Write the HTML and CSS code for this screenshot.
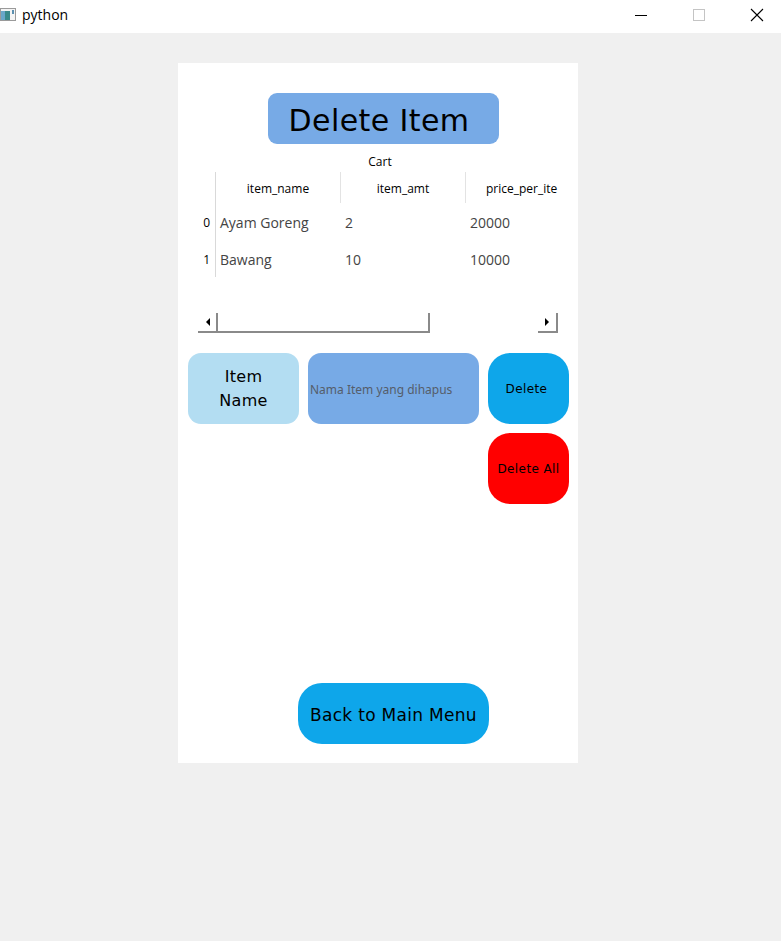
FILE: index.html
```html
<!DOCTYPE html>
<html>
<head>
<meta charset="utf-8">
<title>python</title>
<link rel="stylesheet" href="styles.css">
</head>
<body>
<div class="titlebar">
  <div class="tb-left">
    <svg class="app-icon" width="16" height="14" viewBox="0 0 16 14">
      <rect x="0.5" y="0.5" width="15" height="12" fill="#f4f4f4" stroke="#9a9a9a"/>
      <rect x="1" y="3" width="9" height="9" fill="#3a8a8a"/>
      <rect x="1" y="3" width="4" height="9" fill="#6aa7c9"/>
      <rect x="12" y="2" width="2" height="4" fill="#5a8fb0"/>
    </svg>
    <span class="tb-title">python</span>
  </div>
  <div class="tb-controls">
    <span class="ctl"><svg width="12" height="12" viewBox="0 0 12 12"><path d="M0 6.5h12" stroke="#000" stroke-width="1"/></svg></span>
    <span class="ctl"><svg width="12" height="12" viewBox="0 0 12 12"><rect x="0.5" y="0.5" width="11" height="11" fill="none" stroke="#c4c4c4"/></svg></span>
    <span class="ctl"><svg width="14" height="14" viewBox="0 0 14 14"><path d="M1 1L13 13M13 1L1 13" stroke="#000" stroke-width="1.1"/></svg></span>
  </div>
</div>
<div class="desktop">
  <div class="panel">
    <div class="heading">Delete Item</div>
    <div class="cart-label">Cart</div>
    <div class="table">
      <div class="idx head"></div>
      <div class="hcell">item_name</div>
      <div class="hcell">item_amt</div>
      <div class="hcell last">price_per_ite</div>

      <div class="idx">0</div>
      <div class="cell">Ayam Goreng</div>
      <div class="cell">2</div>
      <div class="cell">20000</div>

      <div class="idx">1</div>
      <div class="cell">Bawang</div>
      <div class="cell">10</div>
      <div class="cell">10000</div>
    </div>
    <div class="scrollbar">
      <div class="sb-arrow left"><span class="tri-left"></span></div>
      <div class="sb-thumb"></div>
      <div class="sb-track"></div>
      <div class="sb-arrow right"><span class="tri-right"></span></div>
    </div>
    <div class="form-row">
      <div class="label-box">Item<br>Name</div>
      <div class="input-box">Nama Item yang dihapus</div>
      <div class="btn-col">
        <div class="btn delete">Delete</div>
        <div class="btn delete-all">Delete All</div>
      </div>
    </div>
    <div class="spacer"></div>
    <div class="back">Back to Main Menu</div>
  </div>
</div>
</body>
</html>
```
FILE: styles.css
```css
html, body {
  margin: 0;
  padding: 0;
  background: #f0f0f0;
  width: 781px;
  height: 941px;
  overflow: hidden;
}
.titlebar {
  height: 33px;
  background: #ffffff;
  display: flex;
  justify-content: space-between;
  align-items: flex-start;
}
.tb-left {
  display: flex;
  align-items: center;
  height: 29px;
}
.tb-title {
  font-family: "Open Sans", "Liberation Sans", sans-serif;
  font-size: 14px;
  color: #000;
  margin-left: 6px;
}
.tb-controls {
  display: flex;
  height: 29px;
  margin-right: -5px;
}
.ctl {
  width: 58px;
  display: flex;
  align-items: center;
  justify-content: center;
}
.desktop {
  padding-left: 178px;
  padding-top: 30px;
}
.panel {
  width: 400px;
  height: 700px;
  background: #ffffff;
  display: flex;
  flex-direction: column;
  font-family: "Open Sans", "Noto Sans", sans-serif;
}
.heading {
  margin-top: 30px;
  margin-left: 90px;
  width: 231px;
  height: 51px;
  background: #77aae6;
  border-radius: 9px;
  display: flex;
  align-items: center;
  justify-content: center;
  font-family: "DejaVu Sans", sans-serif;
  font-size: 30px;
  letter-spacing: 0.4px;
  color: #000;
  box-sizing: border-box;
  padding-right: 9px;
  padding-top: 3px;
}
.cart-label {
  margin-top: 10px;
  text-align: center;
  margin-left: 4px;
  font-size: 12px;
  line-height: 16px;
  color: #000;
}
.table {
  margin-top: 2px;
  margin-left: 20px;
  width: 362px;
  display: grid;
  grid-template-columns: 18px 125px 125px 94px;
  grid-template-rows: 31px 37px 37px;
  overflow: hidden;
}
.idx {
  border-right: 1px solid #d9d9d9;
  font-size: 12px;
  color: #000;
  display: flex;
  align-items: center;
  justify-content: flex-end;
  padding-right: 5px;
  padding-top: 2px;
  box-sizing: border-box;
}
.hcell {
  font-size: 12px;
  color: #000;
  display: flex;
  align-items: center;
  justify-content: center;
  border-right: 1px solid #e3e3e3;
  white-space: nowrap;
  overflow: hidden;
  padding-top: 2px;
}
.hcell.last {
  border-right: none;
  justify-content: flex-start;
  padding-left: 20px;
}
.cell {
  font-size: 14px;
  color: #444;
  display: flex;
  align-items: center;
  padding-left: 4px;
  padding-top: 1px;
  white-space: nowrap;
}
.scrollbar {
  margin-top: 36px;
  margin-left: 20px;
  width: 360px;
  height: 20px;
  display: flex;
  align-items: stretch;
}
.sb-arrow {
  width: 20px;
  box-sizing: border-box;
  border-bottom: 2px solid #8a8a8a;
  display: flex;
  align-items: center;
  justify-content: center;
}
.sb-arrow.left { border-right: 2px solid #8a8a8a; }
.sb-arrow.right { border-right: 2px solid #8a8a8a; }
.tri-left {
  width: 0; height: 0;
  border-top: 4px solid transparent;
  border-bottom: 4px solid transparent;
  border-right: 4px solid #000;
  margin-left: 2px;
}
.tri-right {
  width: 0; height: 0;
  border-top: 4px solid transparent;
  border-bottom: 4px solid transparent;
  border-left: 4px solid #000;
}
.sb-thumb {
  width: 212px;
  box-sizing: border-box;
  border-bottom: 2px solid #8a8a8a;
  border-right: 2px solid #8a8a8a;
}
.sb-track { flex: 1; }
.form-row {
  margin-top: 20px;
  margin-left: 10px;
  display: flex;
  gap: 9px;
  align-items: flex-start;
}
.label-box {
  width: 111px;
  height: 71px;
  background: #b3ddf2;
  border-radius: 13px;
  display: flex;
  align-items: center;
  justify-content: center;
  text-align: center;
  font-family: "DejaVu Sans", sans-serif;
  font-size: 16px;
  line-height: 24px;
  letter-spacing: 0.3px;
  color: #000;
  padding-top: 1px;
  box-sizing: border-box;
}
.input-box {
  width: 171px;
  height: 71px;
  background: #77aae6;
  border-radius: 13px;
  display: flex;
  align-items: center;
  box-sizing: border-box;
  padding-left: 2px;
  padding-top: 1px;
  font-family: "Noto Sans", sans-serif;
  font-size: 12px;
  color: #555d6a;
  white-space: nowrap;
}
.btn-col {
  display: flex;
  flex-direction: column;
  gap: 9px;
}
.btn {
  width: 81px;
  height: 71px;
  border-radius: 22px;
  display: flex;
  align-items: center;
  justify-content: center;
  font-family: "DejaVu Sans", sans-serif;
  font-size: 12px;
  letter-spacing: 0.4px;
  color: #000;
  white-space: nowrap;
  box-sizing: border-box;
  padding-top: 1px;
}
.btn.delete { background: #0ea6ea; padding-right: 4px; }
.btn.delete-all { background: #ff0000; }
.spacer { flex: 1; }
.back {
  margin-left: 120px;
  margin-bottom: 19px;
  width: 191px;
  height: 61px;
  border-radius: 24px;
  background: #0ea6ea;
  display: flex;
  align-items: center;
  justify-content: center;
  font-family: "DejaVu Sans", sans-serif;
  font-size: 17px;
  letter-spacing: 0.3px;
  color: #000;
  box-sizing: border-box;
  padding-top: 2px;
}
```
